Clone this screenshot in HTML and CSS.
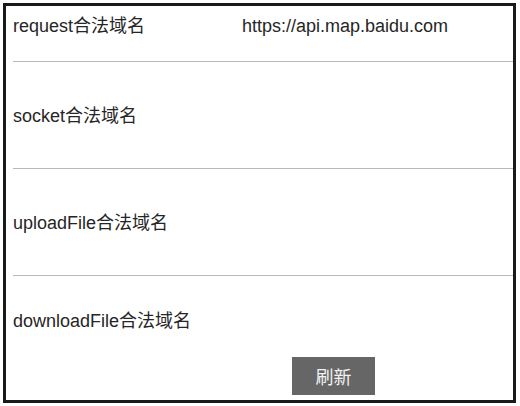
FILE: index.html
```html
<!DOCTYPE html>
<html lang="zh">
<head>
<meta charset="utf-8">
<link rel="stylesheet" href="styles.css">
</head>
<body>
<div class="frame">
  <div class="row row-first">
    <div class="label">request合法域名</div>
    <div class="value">https://api.map.baidu.com</div>
  </div>
  <div class="row row-mid">
    <div class="label">socket合法域名</div>
  </div>
  <div class="row row-mid">
    <div class="label">uploadFile合法域名</div>
  </div>
  <div class="row-last">
    <div class="label">downloadFile合法域名</div>
    <div class="actions"><button class="btn">刷新</button></div>
  </div>
</div>
</body>
</html>
```
FILE: styles.css
```css
html, body { margin: 0; padding: 0; background: #fff; }
body { padding: 3px; font-family: "Liberation Sans", "Noto Sans CJK SC", sans-serif; color: #262626; }
.frame {
  width: 507px;
  height: 394px;
  border: 3px solid #1a1a1a;
  display: flex;
  flex-direction: column;
}
.row {
  margin-left: 7px;
  display: flex;
  border-bottom: 1px solid #b9b9b9;
  box-sizing: border-box;
}
.label, .value { font-size: 18px; line-height: 28px; }
.label { width: 229px; flex: none; }
.row-first { height: 56px; padding-top: 6px; align-items: flex-start; box-sizing: border-box; }
.row-mid { height: 107px; align-items: center; padding-top: 1px; }
.row-last { margin-left: 7px; padding-top: 31px; }
.actions { padding-top: 22px; padding-left: 279px; }
.btn {
  width: 83px;
  height: 38px;
  border: none;
  background: #666;
  color: #f2f2f2;
  font-family: "Noto Sans CJK SC", sans-serif;
  font-size: 18px;
  padding: 0;
}
```
